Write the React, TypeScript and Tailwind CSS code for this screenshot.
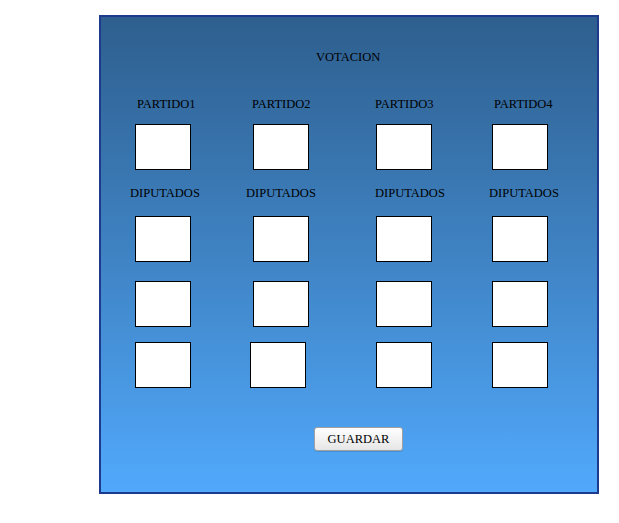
const cols = "grid grid-cols-[118px_123px_116px_100px] pl-[34px]";

function Box({ className = "" }: { className?: string }) {
  return <div className={`w-[56px] h-[46px] border border-black bg-white ${className}`} />;
}

function Label({ text, className = "" }: { text: string; className?: string }) {
  return <span className={`text-[12.5px] leading-[14px] text-black whitespace-nowrap ${className}`}>{text}</span>;
}

export default function App() {
  const partidos = [
    { text: "PARTIDO1", cls: "ml-[2px]" },
    { text: "PARTIDO2", cls: "-ml-[1px]" },
    { text: "PARTIDO3", cls: "-ml-[1px]" },
    { text: "PARTIDO4", cls: "ml-[2px]" },
  ];
  const diputados = ["-ml-[5px]", "-ml-[7px]", "-ml-[1px]", "-ml-[3px]"];

  return (
    <div className="pt-[15px] pl-[99px] bg-white min-h-screen font-['Liberation_Serif','Times_New_Roman',serif]">
      <div className="w-[500px] h-[479px] border-2 border-[#1d3a8c] bg-linear-to-b from-[#2e5f8e] to-[#51a9fc] flex flex-col">
        <div className="mt-[33px] pl-[215px] flex">
          <Label text="VOTACION" />
        </div>

        <div className={`${cols} mt-[33px]`}>
          {partidos.map((p) => (
            <div key={p.text} className="flex">
              <Label text={p.text} className={p.cls} />
            </div>
          ))}
        </div>

        <div className={`${cols} mt-[13px]`}>
          <Box />
          <Box />
          <Box />
          <Box />
        </div>

        <div className={`${cols} mt-[16px]`}>
          {diputados.map((cls, i) => (
            <div key={i} className="flex">
              <Label text="DIPUTADOS" className={cls} />
            </div>
          ))}
        </div>

        <div className={`${cols} mt-[16px]`}>
          <Box />
          <Box />
          <Box />
          <Box />
        </div>

        <div className={`${cols} mt-[19px]`}>
          <Box />
          <Box />
          <Box />
          <Box />
        </div>

        <div className={`${cols} mt-[15px]`}>
          <Box />
          <Box className="-ml-[3px]" />
          <Box />
          <Box />
        </div>

        <div className="mt-[39px] pl-[213px] flex">
          <button className="w-[89px] h-[24px] rounded-[3px] border border-[#a0a0a0] bg-linear-to-b from-white to-[#e6e6e6] font-['Liberation_Serif','Times_New_Roman',serif] text-[12.5px] text-black shadow-[0_1px_0_rgba(0,0,0,0.1)]">
            GUARDAR
          </button>
        </div>
      </div>
    </div>
  );
}
